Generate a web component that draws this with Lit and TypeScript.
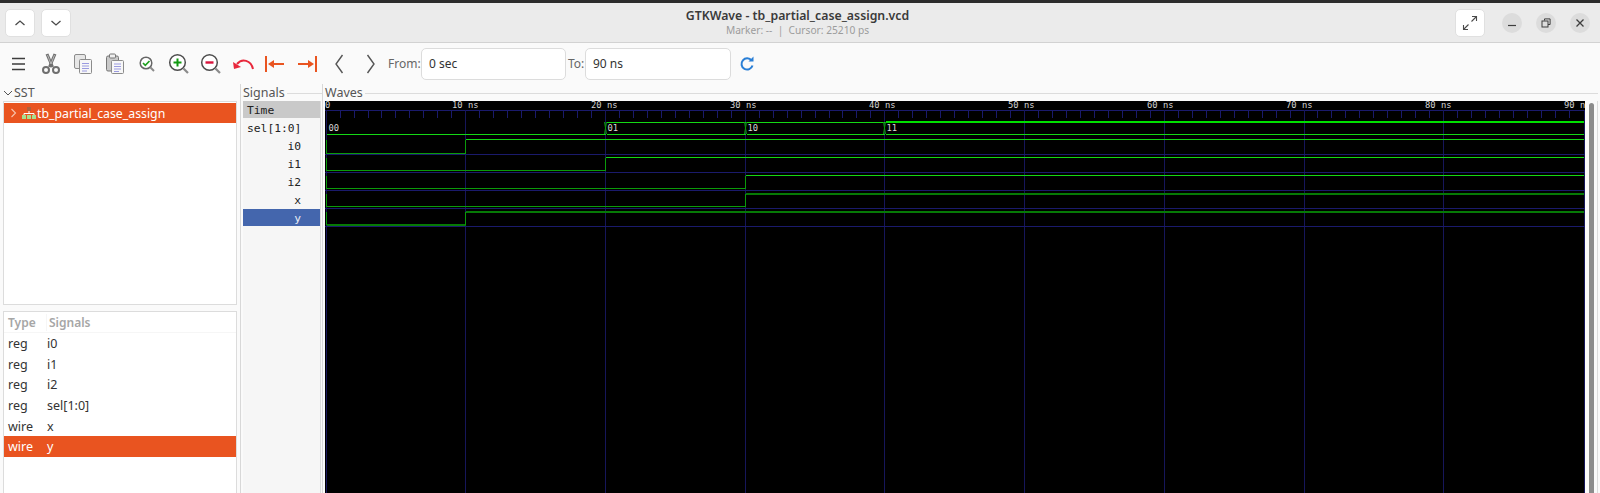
import { LitElement, html, css, svg } from "lit";
import { customElement } from "lit/decorators.js";

const X0 = 325.6;
const STEP = 13.97;
const xAt = (t: number) => Math.round(X0 + t * STEP) + 0.5;
const XEND = 1583.5;
const labelX = (t: number) => 313 + 13.9 * t;

const BRIGHT = "#14d814";
const MID = "#0a9a0a";
const DARK = "#067a06";
const NAVY = "#1a1a6c";
const GRID = "#16165a";

type Wave = { low: number; high: number; at: number; color: string; lowColor: string; lowW: number; highW: number };
const waves: Wave[] = [
  { low: 153.5, high: 139.5, at: 10, color: BRIGHT, lowColor: MID, lowW: 1, highW: 1 },
  { low: 170.5, high: 157.5, at: 20, color: BRIGHT, lowColor: MID, lowW: 1, highW: 1 },
  { low: 188.5, high: 175.5, at: 30, color: BRIGHT, lowColor: MID, lowW: 1, highW: 1 },
  { low: 206.5, high: 194, at: 30, color: DARK, lowColor: MID, lowW: 1, highW: 2 },
  { low: 225, high: 212, at: 10, color: DARK, lowColor: DARK, lowW: 2, highW: 2 },
];
const navyRows = [154.5, 172.5, 190.5, 208.5, 226.5];
const busEdges = [20, 30, 40];
const busLabels: [number, string][] = [
  [0, "00"],
  [20, "01"],
  [30, "10"],
  [40, "11"],
];

@customElement("wave-canvas")
class WaveCanvas extends LitElement {
  static styles = css`
    :host { display: block; width: 1260px; height: 392px; background: #000; }
    svg { display: block; }
    .t { font: 8.8px "DejaVu Sans Mono", monospace; fill: #d4d4d4; white-space: pre; }
    .b { font: 8.8px "DejaVu Sans Mono", monospace; fill: #d8d8d8; }
  `;
  render() {
    const tens = Array.from({ length: 9 }, (_, i) => i * 10);
    const ticks = Array.from({ length: 90 }, (_, i) => i).filter((i) => i % 10 !== 0);
    const labels = Array.from({ length: 9 }, (_, i) => (i + 1) * 10);
    return html`<svg width="1260" height="392" viewBox="325 101 1260 392" shape-rendering="crispEdges">
      <line x1="325" x2="1585" y1="110.5" y2="110.5" stroke=${NAVY} />
      ${ticks.map((t) => svg`<line x1=${xAt(t)} x2=${xAt(t)} y1="111" y2="118" stroke=${NAVY} />`)}
      ${tens.map((t) => svg`<line x1=${xAt(t)} x2=${xAt(t)} y1="110" y2="493" stroke=${GRID} />`)}
      <line x1="1584.5" x2="1584.5" y1="110" y2="493" stroke=${GRID} />
      ${navyRows.map((y) => svg`<line x1="325" x2="1585" y1=${y} y2=${y} stroke=${NAVY} />`)}
      <text class="t" x="325" y="108">0</text>
      ${labels.map((t) => svg`<text class="t" x=${labelX(t)} y="108">${t} ns</text>`)}

      <line x1=${xAt(0)} x2=${xAt(20)} y1="134.5" y2="134.5" stroke=${BRIGHT} />
      <g>
        ${busEdges.map((t, i) => {
          const a = xAt(t);
          const b = i < 2 ? xAt(busEdges[i + 1]) : XEND;
          const top = i === 2 ? "#00e000" : BRIGHT;
          const sw = i === 2 ? 2 : 1;
          return svg`
            <line x1=${a + 1} x2=${b} y1="122" y2="122" stroke=${top} stroke-width=${sw} />
            <line x1=${a + 1} x2=${b} y1="134.5" y2="134.5" stroke=${BRIGHT} />
            <path d="M${a - 1} 134 L${a + 1} 122" fill="none" stroke=${MID} shape-rendering="auto" />
            <path d="M${a - 1} 122 L${a + 1} 134" fill="none" stroke=${MID} shape-rendering="auto" />`;
        })}
      </g>
      ${busLabels.map(([t, s]) => svg`<text class="b" x=${xAt(t) + 2} y="131">${s}</text>`)}

      ${waves.map((w) => {
        const a = xAt(w.at);
        return svg`
          <line x1=${xAt(0)} x2=${xAt(0)} y1=${w.high} y2=${w.low} stroke=${MID} />
          <line x1=${xAt(0)} x2=${a} y1=${w.low} y2=${w.low} stroke=${w.lowColor} stroke-width=${w.lowW} />
          <line x1=${a} x2=${a} y1=${w.high} y2=${w.low} stroke=${MID} />
          <line x1=${a} x2=${XEND} y1=${w.high} y2=${w.high} stroke=${w.color} stroke-width=${w.highW} />`;
      })}
    </svg>`;
  }
}

const ICON = {
  menu: html`<svg class="ic" width="20" height="20" viewBox="0 0 20 20"><path d="M3 4.5h13M3 10h13M3 15.5h13" stroke="#3d3d3d" stroke-width="1.5" fill="none"/></svg>`,
  cut: html`<svg class="ic" width="20" height="22" viewBox="0 0 20 22"><g fill="none" stroke="#6f6f6f"><path d="M6 1l5.5 13" stroke-width="3"/><path d="M14 1L8.5 14" stroke-width="3"/><circle cx="5" cy="17" r="3" stroke-width="2"/><circle cx="15" cy="17" r="3" stroke-width="2"/></g><path d="M6.5 2l3.5 9M13.5 2L10 11" stroke="#b8b8b8" fill="none"/></svg>`,
  copy: html`<svg class="ic" width="20" height="22" viewBox="0 0 20 22"><rect x="1.5" y="1.5" width="11" height="14" rx="1.5" fill="#e6e6e6" stroke="#8c8c8c"/><rect x="6.5" y="6.5" width="12" height="14" rx="1" fill="#f7f7f7" stroke="#8c8c8c"/><path d="M9 10.5h7M9 13h7M9 15.5h7M9 18h5" stroke="#9a9ae0"/></svg>`,
  paste: html`<svg class="ic" width="20" height="22" viewBox="0 0 20 22"><rect x="1.5" y="3" width="12" height="15" rx="1.5" fill="#c9c9c9" stroke="#777"/><rect x="4.5" y="1" width="6" height="4" rx="1" fill="#eee" stroke="#777"/><rect x="6.5" y="7.5" width="12" height="13" rx="1" fill="#f7f7f7" stroke="#8c8c8c"/><path d="M9 11h7M9 13.5h7M9 16h7M9 18.5h5" stroke="#9a9ae0"/></svg>`,
  fit: html`<svg class="ic" width="20" height="20" viewBox="0 0 20 20"><circle cx="9" cy="9" r="5.8" fill="#fff" stroke="#666" stroke-width="1.5"/><path d="M13.5 13.5l3.5 3.5" stroke="#8a8a8a" stroke-width="2"/><path d="M6 9l2.3 2.3L12.5 7" stroke="#1fa01f" stroke-width="1.7" fill="none"/></svg>`,
  zoomIn: html`<svg class="ic" width="22" height="22" viewBox="0 0 22 22"><circle cx="9.5" cy="9.5" r="7.8" fill="#fff" stroke="#4d4d4d" stroke-width="1.5"/><path d="M15.5 15.5l4.5 4.5" stroke="#8a8a8a" stroke-width="2.2"/><path d="M5.5 9.5h8M9.5 5.5v8" stroke="#129a12" stroke-width="2"/></svg>`,
  zoomOut: html`<svg class="ic" width="22" height="22" viewBox="0 0 22 22"><circle cx="9.5" cy="9.5" r="7.8" fill="#fff" stroke="#4d4d4d" stroke-width="1.5"/><path d="M15.5 15.5l4.5 4.5" stroke="#8a8a8a" stroke-width="2.2"/><path d="M5.5 9.5h8" stroke="#d8143c" stroke-width="2.4"/></svg>`,
  undo: html`<svg class="ic" width="22" height="14" viewBox="0 0 22 14"><path d="M21 12C19 3 10 1 5 7" stroke="#e8283c" stroke-width="2" fill="none"/><path d="M1 5l1 7 7-2z" fill="#e8283c"/></svg>`,
  first: html`<svg class="ic" width="20" height="18" viewBox="0 0 20 18"><path d="M1 1v16" stroke="#e95420" stroke-width="2"/><path d="M5 9h14" stroke="#e95420" stroke-width="2"/><path d="M3 9l6-4v8z" fill="#e95420"/></svg>`,
  last: html`<svg class="ic" width="20" height="18" viewBox="0 0 20 18"><path d="M19 1v16" stroke="#e95420" stroke-width="2"/><path d="M1 9h14" stroke="#e95420" stroke-width="2"/><path d="M17 9l-6-4v8z" fill="#e95420"/></svg>`,
  prev: html`<svg class="ic" width="12" height="22" viewBox="0 0 12 22"><path d="M9.5 2L3 11l6.5 9" stroke="#555" stroke-width="1.4" fill="none"/></svg>`,
  next: html`<svg class="ic" width="12" height="22" viewBox="0 0 12 22"><path d="M2.5 2L9 11l-6.5 9" stroke="#555" stroke-width="1.4" fill="none"/></svg>`,
  reload: html`<svg width="16" height="16" viewBox="0 0 16 16"><path d="M12.6 4.6A5.6 5.6 0 1 0 13.5 9.5" stroke="#2a7fd6" stroke-width="2" fill="none"/><path d="M9.5 5.6h5v-5z" fill="#2a7fd6"/></svg>`,
  up: html`<svg width="12" height="8" viewBox="0 0 12 8"><path d="M1.5 6L6 2l4.5 4" stroke="#4a4a4a" stroke-width="1.3" fill="none"/></svg>`,
  down: html`<svg width="12" height="8" viewBox="0 0 12 8"><path d="M1.5 2L6 6l4.5-4" stroke="#4a4a4a" stroke-width="1.3" fill="none"/></svg>`,
  expand: html`<svg width="16" height="16" viewBox="0 0 16 16"><path d="M9.5 6.5L14 2M2 14l4.5-4.5M10 1.5h4.5V6M1.5 10v4.5H6" stroke="#4a4a4a" stroke-width="1.1" fill="none"/></svg>`,
  min: html`<svg width="10" height="10" viewBox="0 0 10 10"><path d="M1 7.5h8" stroke="#3d3d3d" stroke-width="1.2"/></svg>`,
  max: html`<svg width="10" height="10" viewBox="0 0 10 10"><path d="M3.5 2.5V.9h5.6v5.6H7" stroke="#3d3d3d" fill="none"/><rect x="1" y="3" width="6" height="6" stroke="#3d3d3d" fill="none"/></svg>`,
  close: html`<svg width="10" height="10" viewBox="0 0 10 10"><path d="M1.5 1.5l7 7M8.5 1.5l-7 7" stroke="#3d3d3d" stroke-width="1.3"/></svg>`,
  chevDown: html`<svg width="10" height="8" viewBox="0 0 10 8"><path d="M1 2l4 4 4-4" stroke="#555" fill="none"/></svg>`,
  chevRight: html`<svg width="7" height="10" viewBox="0 0 7 10"><path d="M1.5 1l4 4-4 4" stroke="#f8c4ae" stroke-width="1.1" fill="none"/></svg>`,
  tree: html`<svg width="14" height="12" viewBox="0 0 14 12"><rect x="5" y="0" width="4" height="4" fill="#b0603a"/><path d="M7 4v3M2 8V6.5h10V8" stroke="#fff" fill="none"/><rect x="0" y="8" width="4" height="4" fill="#a6e08e"/><rect x="5" y="8" width="4" height="4" fill="#a6e08e"/><rect x="10" y="8" width="4" height="4" fill="#a6e08e"/></svg>`,
};

const rows = [
  ["reg", "i0"],
  ["reg", "i1"],
  ["reg", "i2"],
  ["reg", "sel[1:0]"],
  ["wire", "x"],
  ["wire", "y"],
];
const sigNames = ["sel[1:0]", "i0", "i1", "i2", "x", "y"];

@customElement("app-root")
export class AppRoot extends LitElement {
  static styles = css`
    :host {
      display: block;
      width: 1600px;
      height: 493px;
      overflow: hidden;
      background: #fafafa;
      font-family: "Noto Sans", "Open Sans", sans-serif;
      color: #3d3d3d;
    }
    .topline { height: 3px; background: #2c2c2c; }
    .titlebar {
      height: 39px;
      background: #ebebeb;
      border-bottom: 1px solid #d2d2d2;
      display: grid;
      grid-template-columns: 1fr auto 1fr;
      align-items: center;
      padding: 0 10px 0 5px;
    }
    .nav { display: flex; gap: 6px; }
    .btn {
      width: 30px;
      height: 28px;
      box-sizing: border-box;
      background: #fff;
      border: 1px solid #e0e0e0;
      border-radius: 5px;
      display: flex;
      align-items: center;
      justify-content: center;
    }
    .title { text-align: center; line-height: 13px; }
    .title b { display: block; font-size: 12.3px; font-weight: 600; color: #3a3a3a; line-height: 16px; }
    .title span { display: block; font-size: 10.2px; color: #9c9c9c; line-height: 13px; }
    .winctl { display: flex; justify-content: flex-end; align-items: center; }
    .winctl .btn { margin-right: 17px; }
    .circle {
      width: 20px;
      height: 20px;
      border-radius: 50%;
      background: #dcdcdc;
      display: flex;
      align-items: center;
      justify-content: center;
      margin-left: 14px;
    }
    .winctl .btn + .circle { margin-left: 0; }

    .toolbar { height: 41px; display: flex; align-items: center; background: #fafafa; padding-left: 9px; font-size: 12px; }
    .tool { width: 32px; display: flex; justify-content: center; flex: none; }
    .tool:first-child { width: 20px; margin-right: 6px; }
    .lbl { color: #666; flex: none; }
    .lbl.fromL { width: 33px; margin-left: 1px; }
    .lbl.toL { width: 17px; }
    .field {
      height: 32px;
      box-sizing: border-box;
      background: #fff;
      border: 1px solid #dcdcdc;
      border-radius: 5px;
      padding: 0 7px;
      display: flex;
      align-items: center;
      color: #333;
      font-size: 12px;
      flex: none;
    }
    .from { width: 145px; margin-right: 2px; }
    .to { width: 146px; }
    .reload { margin-left: 8px; display: flex; }

    .main { display: grid; grid-template-columns: 240px 82px 1278px; height: 409px; }
    .legend { height: 17px; display: flex; align-items: center; font-size: 12.5px; color: #555; line-height: 17px; }
    .legend::after { content: ""; flex: 1; border-top: 1px solid #dcdcdc; margin: 1px 0 0 2px; }

    .left { display: flex; flex-direction: column; }
    .sst { height: 17px; display: flex; align-items: center; font-size: 12.5px; color: #555; padding-left: 3px; gap: 1px; }
    .box { margin: 0 3px 0 3px; background: #fff; border: 1px solid #dcdcdc; box-sizing: border-box; }
    .box.tree { height: 204px; padding-top: 1px; }
    .treeRow {
      height: 20px;
      background: #e95420;
      color: #fff;
      display: flex;
      align-items: center;
      font-size: 12.3px;
      padding-left: 6px;
    }
    .treeRow svg:first-child { margin-right: 5px; }
    .treeRow svg + svg { margin-right: 1px; }
    .split { height: 5px; }
    .box.list { flex: 1; margin-top: 1px; font-size: 12.5px; }
    .head { height: 20px; display: flex; align-items: center; color: #a6a6a6; font-weight: 600; font-size: 12px; border-bottom: 1px solid #f6f6f6; }
    .row { height: 20.7px; display: flex; align-items: center; color: #333; }
    .row.sel { background: #e95420; color: #fff; }
    .c1 { width: 43px; padding-left: 4px; box-sizing: border-box; flex: none; }
    .head .c1 { border-right: 1px solid #f6f6f6; }
    .head .c2 { padding-left: 2px; }

    .signals { border-left: 1px solid #d8d8d8; box-sizing: border-box; padding-left: 2px; display: flex; flex-direction: column; background: #fafafa; }
    .signals .inner { flex: 1; width: 77px; background: #f6f6f6; display: flex; flex-direction: column; gap: 1px; font: 11.3px "DejaVu Sans Mono", monospace; color: #222; box-shadow: 1px 0 0 #dcdcdc; }
    .sig { height: 17px; line-height: 19px; text-align: right; padding-right: 19px; white-space: nowrap; }
    .sig.time { background: #c9c9c9; text-align: left; padding-left: 4px; }
    .sig.left-al { text-align: left; padding-left: 4px; padding-right: 0; }
    .sig.on { background: #4466ad; color: #e8ecf5; }

    .wavesCol { border-left: 1px solid #d8d8d8; padding: 0 2px; display: flex; flex-direction: column; box-sizing: border-box; width: 1278px; }
    .waveBody { flex: 1; display: grid; grid-template-columns: 1260px 12px; border-right: 1px solid #dcdcdc; min-height: 0; }
    .track { background: #fafafa; padding: 2px 0 0 4px; box-sizing: border-box; overflow: hidden; }
    .thumb { width: 5px; height: 400px; background: #8c8c8c; border-radius: 3px; }
  `;

  render() {
    return html`
      <div class="topline"></div>
      <header class="titlebar">
        <div class="nav">
          <div class="btn">${ICON.up}</div>
          <div class="btn">${ICON.down}</div>
        </div>
        <div class="title">
          <b>GTKWave - tb_partial_case_assign.vcd</b>
          <span>Marker: -- &nbsp;|&nbsp; Cursor: 25210 ps</span>
        </div>
        <div class="winctl">
          <div class="btn">${ICON.expand}</div>
          <div class="circle">${ICON.min}</div>
          <div class="circle">${ICON.max}</div>
          <div class="circle">${ICON.close}</div>
        </div>
      </header>
      <div class="toolbar">
        ${[ICON.menu, ICON.cut, ICON.copy, ICON.paste, ICON.fit, ICON.zoomIn, ICON.zoomOut, ICON.undo, ICON.first, ICON.last, ICON.prev, ICON.next].map(
          (i) => html`<div class="tool">${i}</div>`
        )}
        <span class="lbl fromL">From:</span>
        <div class="field from">0 sec</div>
        <span class="lbl toL">To:</span>
        <div class="field to">90 ns</div>
        <div class="reload">${ICON.reload}</div>
      </div>
      <div class="main">
        <section class="left">
          <div class="sst">${ICON.chevDown}<span>SST</span></div>
          <div class="box tree">
            <div class="treeRow">${ICON.chevRight}${ICON.tree}<span>tb_partial_case_assign</span></div>
          </div>
          <div class="split"></div>
          <div class="box list">
            <div class="head"><div class="c1">Type</div><div class="c2">Signals</div></div>
            ${rows.map(
              ([t, n]) => html`<div class="row ${n === "y" ? "sel" : ""}"><div class="c1">${t}</div><div>${n}</div></div>`
            )}
          </div>
        </section>
        <section class="signals">
          <div class="legend">Signals</div>
          <div class="inner">
            <div class="sig time">Time</div>
            ${sigNames.map(
              (n) => html`<div class="sig ${n === "y" ? "on" : ""} ${n === "sel[1:0]" ? "left-al" : ""}">${n}</div>`
            )}
          </div>
        </section>
        <section class="wavesCol">
          <div class="legend">Waves</div>
          <div class="waveBody">
            <wave-canvas></wave-canvas>
            <div class="track"><div class="thumb"></div></div>
          </div>
        </section>
      </div>
    `;
  }
}
void WaveCanvas;
